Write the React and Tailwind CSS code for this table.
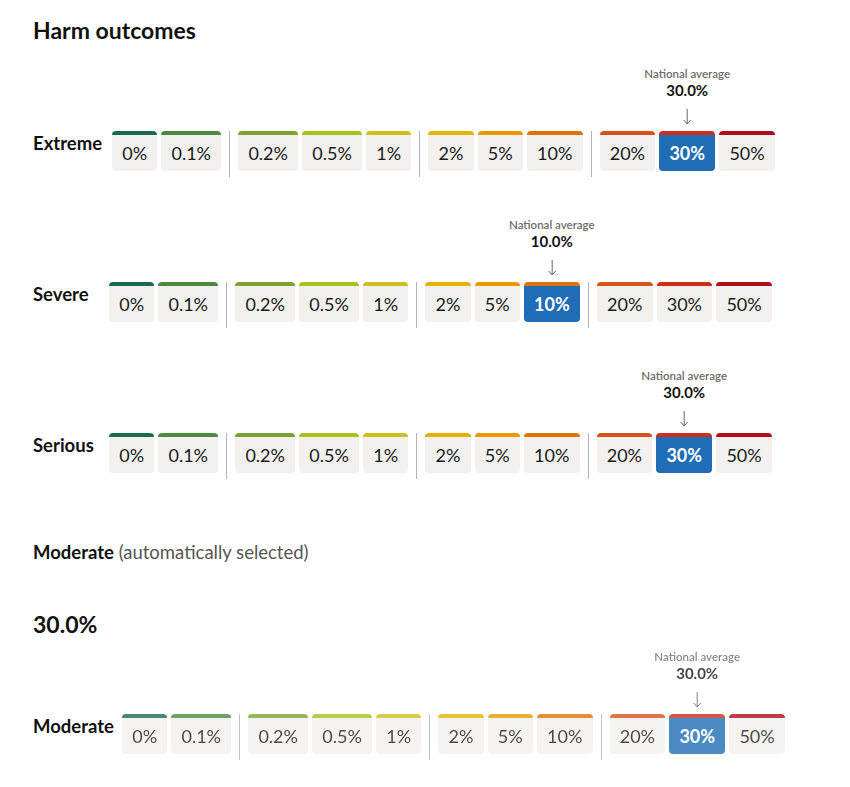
import { Fragment } from "react";

// colour bands for each level, grouped the way the scale is split
const GROUPS = [
  [
    { v: "0%", bar: "border-t-[#1b6b50]" },
    { v: "0.1%", bar: "border-t-[#4c8a3e]" },
  ],
  [
    { v: "0.2%", bar: "border-t-[#7ca32e]" },
    { v: "0.5%", bar: "border-t-[#a8c21c]" },
    { v: "1%", bar: "border-t-[#cdbf1e]" },
  ],
  [
    { v: "2%", bar: "border-t-[#e5b400]" },
    { v: "5%", bar: "border-t-[#e99800]" },
    { v: "10%", bar: "border-t-[#df7300]" },
  ],
  [
    { v: "20%", bar: "border-t-[#d6521a]" },
    { v: "30%", bar: "border-t-[#cc2e1a]" },
    { v: "50%", bar: "border-t-[#ad0d1d]" },
  ],
];

function Marker({ value }) {
  return (
    <div className="absolute bottom-[46px] left-1/2 -translate-x-1/2 flex flex-col items-center whitespace-nowrap">
      <span className="text-[11.5px] leading-[17px] font-semibold text-[#6b6b6b]">National average</span>
      <span className="text-[15px] leading-[17px] font-bold text-[#111]">{value}</span>
      <svg width="10" height="16" viewBox="0 0 10 16" className="mt-[10px]">
        <line x1="5" y1="0" x2="5" y2="15" stroke="#666" strokeWidth="1" />
        <polyline points="1.5,11 5,15 8.5,11" fill="none" stroke="#666" strokeWidth="1" />
      </svg>
    </div>
  );
}

function Level({ item, selected, avg }) {
  return (
    <div className="relative">
      {selected && <Marker value={avg} />}
      <button
        className={`flex h-[40px] items-center justify-center rounded-[4px] border-t-4 px-[10.2px] text-[18px] leading-none ${item.bar} ${
          selected ? "bg-[#1f6db5] font-bold text-white" : "bg-[#f2f1ef] text-[#1a1a1a]"
        }`}
      >
        {item.v}
      </button>
    </div>
  );
}

function HarmRow({ label, labelW, selected, avg, faded }) {
  return (
    <div className="flex items-start pt-[64px]">
      <div className={`${labelW} shrink-0 text-[18.5px] leading-[24px] font-bold text-[#111]`}>{label}</div>
      <div className={`flex items-start ${faded ? "opacity-80" : ""}`}>
        {GROUPS.map((group, i) => (
          <Fragment key={i}>
            {i > 0 && <div className="mx-2 h-[46px] w-px bg-[#b5b5b5]" />}
            <div className="flex gap-1">
              {group.map((item) => (
                <Level key={item.v} item={item} selected={item.v === selected} avg={avg} />
              ))}
            </div>
          </Fragment>
        ))}
      </div>
    </div>
  );
}

export default function App() {
  return (
    <div className="min-h-screen bg-white pl-[33px] pt-[15px] font-['Lato',sans-serif] text-[#111]">
      <h2 className="text-[23px] leading-[30px] font-bold">Harm outcomes</h2>

      <div className="mt-[22px]">
        <HarmRow label="Extreme" labelW="w-[79px]" selected="30%" avg="30.0%" />
      </div>
      <div className="mt-[41px]">
        <HarmRow label="Severe" labelW="w-[76px]" selected="10%" avg="10.0%" />
      </div>
      <div className="mt-[41px]">
        <HarmRow label="Serious" labelW="w-[76px]" selected="30%" avg="30.0%" />
      </div>

      <p className="mt-[61px] text-[18.5px] leading-[24px]">
        <span className="font-bold">Moderate</span>{" "}
        <span className="text-[#555]">(automatically selected)</span>
      </p>

      <p className="mt-[45px] text-[23px] leading-[30px] font-bold">30.0%</p>

      <div className="mt-[11px]">
        <HarmRow label="Moderate" labelW="w-[89px]" selected="30%" avg="30.0%" faded />
      </div>
    </div>
  );
}
